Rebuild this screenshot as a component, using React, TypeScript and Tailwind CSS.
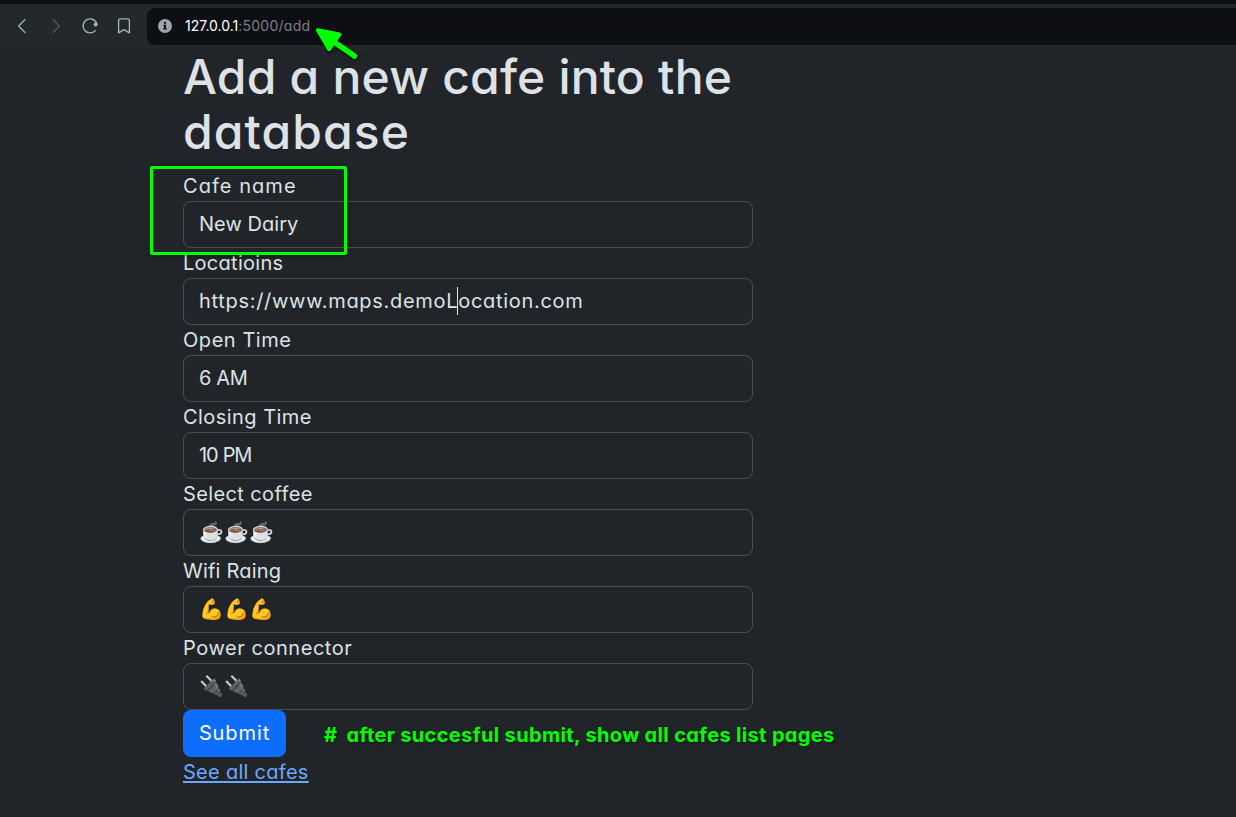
type Field = { id: string; label: string; value: string; labelClass: string; valueClass: string; caretAt?: number };

const fields: Field[] = [
  { id: "name", label: "Cafe name", value: "New Dairy", labelClass: "tracking-[1.05px]", valueClass: "tracking-[0.05px]" },
  { id: "location", label: "Locatioins", value: "https://www.maps.demoLocation.com", labelClass: "tracking-[0.28px]", valueClass: "tracking-[0.7px]", caretAt: 22 },
  { id: "open", label: "Open Time", value: "6 AM", labelClass: "tracking-[0.55px]", valueClass: "tracking-[-0.4px]" },
  { id: "close", label: "Closing Time", value: "10 PM", labelClass: "tracking-[0.45px]", valueClass: "tracking-[-1.2px] [word-spacing:1px]" },
  { id: "coffee", label: "Select coffee", value: "☕☕☕", labelClass: "tracking-[0.38px]", valueClass: "tracking-[0.1px]" },
  { id: "wifi", label: "Wifi Raing", value: "💪💪💪", labelClass: "tracking-[0.2px]", valueClass: "tracking-[0.1px]" },
  { id: "power", label: "Power connector", value: "🔌🔌", labelClass: "tracking-[0.55px]", valueClass: "tracking-[0.1px]" },
];

function BrowserBar() {
  return (
    <header className="flex h-[50px] flex-col bg-[#23282b]">
      <div className="h-1 shrink-0 bg-[#0e0e14]" />
      <div className="flex h-[45px] items-center">
        <div className="flex w-[147px] shrink-0 items-center pb-0.5 text-[#a3b1b4]">
          <svg className="ml-[10px] size-6" viewBox="0 0 24 24" fill="none" stroke="currentColor" strokeWidth="1.3" strokeLinecap="round" strokeLinejoin="round">
            <path d="M15 5.5 8.7 12l6.3 6.5" />
          </svg>
          <svg className="ml-[10px] size-6 text-[#52595c]" viewBox="0 0 24 24" fill="none" stroke="currentColor" strokeWidth="1.3" strokeLinecap="round" strokeLinejoin="round">
            <path d="m9 5.5 6.3 6.5L9 18.5" />
          </svg>
          <svg className="ml-[10px] size-6" viewBox="0 0 24 24" fill="none" stroke="currentColor" strokeWidth="1.4" strokeLinecap="round">
            <path d="M17.2 16.7a7 7 0 1 1 1-8.3l.7 2" />
            <circle cx="17.6" cy="10.5" r="2" fill="currentColor" stroke="none" />
          </svg>
          <svg className="ml-[10px] size-6" viewBox="0 0 24 24" fill="none" stroke="currentColor" strokeWidth="1.4" strokeLinejoin="round">
            <path d="M6.6 6.4a1.5 1.5 0 0 1 1.5-1.5h7.8a1.5 1.5 0 0 1 1.5 1.5v12.4L12 15.6l-5.4 3.2Z" />
          </svg>
        </div>
        <div className="flex h-[37px] grow items-center rounded-l-lg bg-[#0e0f14] pb-0.5 pl-[11px]">
          <svg className="size-[14px]" viewBox="0 0 14 14">
            <circle cx="7" cy="7" r="7" fill="#a0a2ab" />
            <path d="M6 3h2v1.7H6ZM5.3 5.8H8v3.5h.9v1.2H5.1V9.3H6V7h-.7Z" fill="#0e0f14" />
          </svg>
          <div className="ml-[13px] text-sm leading-5">
            <span className="text-white">127.0.0.1</span>
            <span className="tracking-[0.25px] text-[#7b7d84]">:5000/add</span>
          </div>
        </div>
      </div>
    </header>
  );
}

function FormField({ field }: { field: Field }) {
  const before = field.caretAt ? field.value.slice(0, field.caretAt) : field.value;
  const after = field.caretAt ? field.value.slice(field.caretAt) : "";
  return (
    <div>
      <div className={`h-[30px] leading-[30px] ${field.labelClass}`}>{field.label}</div>
      <div className={`flex h-[47px] items-center rounded-lg border border-[#495057] pb-[2px] pl-[15px] leading-[30px] ${field.valueClass}`}>
        <span className="whitespace-pre">{before}</span>
        {field.caretAt && <span className="-ml-px h-7 w-px bg-[#dee2e6]" />}
        <span>{after}</span>
      </div>
    </div>
  );
}

export default function App() {
  return (
    <div className="relative h-[817px] overflow-hidden bg-[#212529] font-['Inter',sans-serif] text-xl text-[#dee2e6] [font-feature-settings:'cv11']">
      <BrowserBar />
      <main className="ml-[183px] w-[570px]">
        <h1 className="-mt-px pb-3 text-[48px] font-medium leading-[55px] whitespace-nowrap">
          <span className="tracking-[0.2px]">Add a new cafe into the</span>
          <br />
          <span className="tracking-[1.1px]">database</span>
        </h1>
        {fields.map((field) => (
          <FormField key={field.id} field={field} />
        ))}
        <div className="flex items-center">
          <button className="h-[47px] w-[103px] shrink-0 rounded-lg bg-[#0d6efd] pb-0.5 tracking-[0.9px] text-white">Submit</button>
          <p className="ml-[38px] mt-0.5 font-bold tracking-[0.35px] whitespace-nowrap text-[#00ff00] [text-shadow:2px_2px_3px_#0004]">
            <span className="mr-1">#</span> after succesful submit, show all cafes list pages
          </p>
        </div>
        <a href="#" className="block leading-[30px] tracking-[0.28px] text-[#6ea8fe] underline decoration-2 underline-offset-[2px]">
          See all cafes
        </a>
      </main>
      <div className="absolute left-[150px] top-[166px] h-[89px] w-[197px] rounded-xs border-3 border-[#00ff00] shadow-[1px_1px_4px_#0006]" />
      <svg className="absolute left-[310px] top-[22px] drop-shadow-[1px_2px_2px_#0008]" width="54" height="42" viewBox="0 0 54 42">
        <path d="M22 18.5 44.5 34" stroke="#00ff00" strokeWidth="5.5" strokeLinecap="round" />
        <path d="M8 8.3 29.2 12.5 19 27Z" fill="#00ff00" stroke="#00ff00" strokeWidth="4" strokeLinejoin="round" />
      </svg>
    </div>
  );
}
